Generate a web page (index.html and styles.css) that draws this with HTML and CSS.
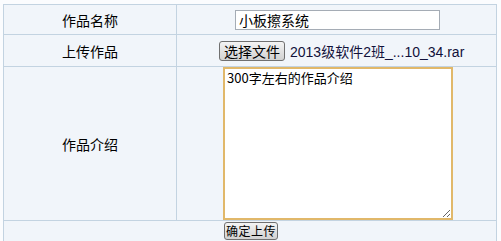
FILE: index.html
```html
<!DOCTYPE html>
<html lang="zh">

<head>
    <meta charset="UTF-8">
    <meta name="viewport" content="width=device-width, initial-scale=1.0">
    <title>上传作品</title>
    <link rel="stylesheet" href="styles.css">
</head>

<body>
    <form class="upload">
        <table class="form-table">
            <tr class="row-name">
                <td class="label">作品名称</td>
                <td class="field">
                    <input type="text" class="text-input" value="小板擦系统">
                </td>
            </tr>
            <tr class="row-file">
                <td class="label">上传作品</td>
                <td class="field">
                    <span class="file-box">
                        <button type="button" class="btn">选择文件</button>
                        <span class="file-name">2013级软件2班_...10_34.rar</span>
                    </span>
                </td>
            </tr>
            <tr class="row-intro">
                <td class="label">作品介绍</td>
                <td class="field">
                    <textarea class="intro">300字左右的作品介绍</textarea>
                </td>
            </tr>
            <tr class="row-submit">
                <td class="submit" colspan="2">
                    <button type="submit" class="btn">确定上传</button>
                </td>
            </tr>
        </table>
    </form>
</body>

</html>
```

FILE: styles.css
```css
body {
    margin: 4px 0 0 3px;
    background: #fbfcfe;
    font-family: "Noto Sans CJK SC", "DejaVu Sans", sans-serif;
    font-size: 14px;
    color: #000;
}

.form-table {
    border-collapse: collapse;
    width: 494px;
    background-color: #f1f5fa;
}

.form-table td {
    border: 1px solid #c3d3e1;
    padding: 0;
}

.label {
    width: 172px;
    text-align: center;
}

.field {
    text-align: center;
}

.row-name {
    height: 30px;
}

.row-file {
    height: 32px;
}

.row-intro {
    height: 153px;
}

.row-submit {
    height: 21px;
}

.text-input {
    display: block;
    box-sizing: border-box;
    width: 205px;
    height: 20px;
    margin: 0 0 0 58px;
    padding: 0 3px;
    border: 1px solid #a5acb5;
    background: #fff;
    font-family: "Noto Sans CJK SC", sans-serif;
    font-size: 14px;
    line-height: 18px;
    text-align: left;
}

.file-box {
    display: flex;
    align-items: center;
    margin-left: 42px;
}

.btn {
    box-sizing: border-box;
    padding: 0 3px;
    border: 1px solid #707070;
    border-radius: 3px;
    background: linear-gradient(#f4f4f4, #e2e2e2 50%, #d2d2d2);
    font-family: "Noto Sans CJK SC", sans-serif;
    font-size: 14px;
    line-height: 16px;
    color: #000;
    white-space: nowrap;
}

.file-box .btn {
    width: 66px;
    height: 20px;
}

.file-name {
    margin-left: 5px;
    font-family: "Liberation Sans", "Noto Sans CJK SC", sans-serif;
    font-size: 14px;
    color: #11113a;
}

.intro {
    display: block;
    box-sizing: border-box;
    width: 230px;
    height: 153px;
    margin: 0 0 0 46px;
    padding: 1px 2px;
    border: 2px solid #e1b86a;
    background: #fff;
    font-family: "Noto Sans CJK SC", monospace;
    font-size: 13px;
    line-height: 16px;
    resize: both;
    outline: none;
}

.submit {
    padding-left: 220px !important;
}

.submit .btn {
    display: block;
    width: 54px;
    height: 18px;
    padding: 0;
    font-size: 12px;
    letter-spacing: 0.5px;
    line-height: 14px;
    text-align: center;
}
```
